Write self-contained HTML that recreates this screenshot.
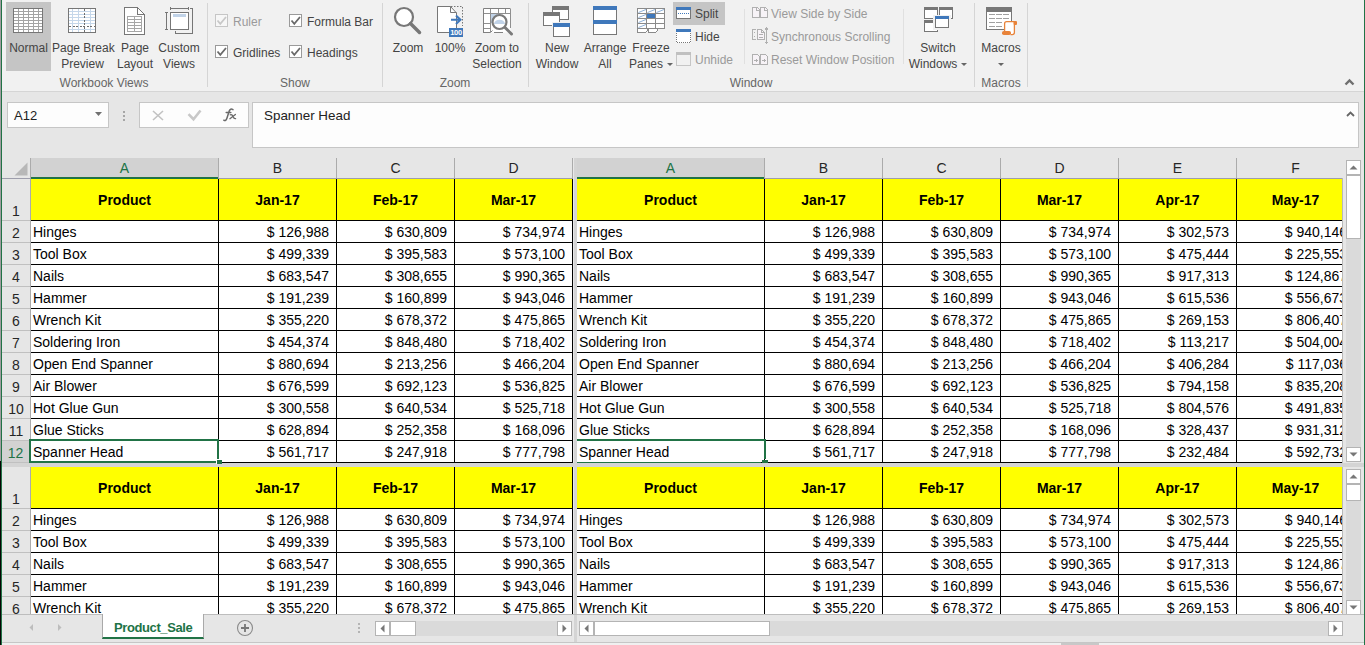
<!DOCTYPE html>
<html><head><meta charset="utf-8">
<style>
*{margin:0;padding:0;box-sizing:border-box}
html,body{width:1365px;height:645px;overflow:hidden;background:#e6e6e6;font-family:"Liberation Sans",sans-serif;position:relative}
.abs{position:absolute}
#ribbon{position:absolute;left:0;top:0;width:1365px;height:92px;background:#f1f1f1;border-bottom:1px solid #d5d5d5}
.rt{position:absolute;font-size:12px;color:#444;white-space:nowrap;line-height:15px}
.rt.c{line-height:16px}
.rt.c{text-align:center}
.dis{color:#9a9a9a}
.dd{display:inline-block;width:0;height:0;border-left:3px solid transparent;border-right:3px solid transparent;border-top:3px solid #666;margin-left:4px;vertical-align:middle}
.gl{position:absolute;font-size:12px;color:#666;white-space:nowrap;line-height:15px;top:76px}
.sep{position:absolute;width:1px;background:#d5d5d5}
.hl{position:absolute;background:#c5c5c5}
.cb{position:absolute;width:13px;height:13px;border:1px solid #8a8a8a;background:#fff}
.cb svg{position:absolute;left:1px;top:1px}
/* grid */
.pane{position:absolute;overflow:hidden;background:#e6e6e6}
.pane div{position:absolute}
.ch{top:0;height:20px;background:#e6e6e6;font-size:14px;color:#262626;text-align:center;line-height:20px;padding-top:0px}
.ch.sel{background:#d2d2d2;color:#217346}
.chsep{top:0;width:1px;height:20px;background:#ababab}
.chbot{height:1px;background:#9e9eac}
.chgreen{height:2px;background:#217346}
.corner{left:0;top:0;width:30px;height:20px;background:#e6e6e6}
.rh{left:0;width:30px;background:#e6e6e6;font-size:14px;color:#262626}
.rh span{position:absolute;left:1px;width:30px;text-align:center;bottom:1px;line-height:16px}
.rh.sel{background:#d2d2d2;color:#217346}
.rhsep{left:0;width:30px;height:1px;background:#c0c0c0}
.rhright{left:30px;width:1px;background:#ababab}
.sbb{position:absolute;width:15px;height:15px;background:#fff;border:1px solid #b4b4b4}
.sbb svg{position:absolute;left:0;top:0}
.sbt{position:absolute;background:#fff;border:1px solid #b4b4b4}
.yel{background:#ffff00}
.wht{background:#fff}
.vb{width:1px;background:#000}
.hb{height:1px;background:#000}
.hd{height:41px;line-height:43px;text-align:center;font-weight:bold;font-size:14px;color:#000;white-space:nowrap}
.tl{height:21px;line-height:22px;font-size:14px;color:#000;white-space:nowrap}
.tr{height:21px;line-height:22px;font-size:14px;color:#000;white-space:nowrap;text-align:right}
</style></head><body>
<div style="position:absolute;left:0;top:0;width:1px;height:461px;background:#a09ca0;z-index:50"></div>
<div style="position:absolute;left:0;top:461px;width:1px;height:184px;background:#080404;z-index:50"></div>
<div style="position:absolute;left:1px;top:0;width:1px;height:645px;background:#217346;z-index:50"></div>
<div style="position:absolute;left:1364px;top:0;width:1px;height:645px;background:#217346;z-index:50"></div>
<div id="ribbon">
<div class="hl" style="left:6px;top:2px;width:45px;height:69px"></div>
<div class="hl" style="left:673px;top:2px;width:52px;height:23px"></div>
<svg width="1365" height="92" style="position:absolute;left:0;top:0" shape-rendering="crispEdges">
<!-- Normal icon -->
<rect x="13" y="8" width="30" height="25" fill="#a3a3a3"/>
<rect x="13.5" y="8.5" width="29" height="24" fill="none" stroke="#767676"/>
<g fill="#fff">
<rect x="14" y="9" width="4" height="2"/><rect x="19" y="9" width="4" height="2"/><rect x="24" y="9" width="4" height="2"/><rect x="29" y="9" width="4" height="2"/><rect x="34" y="9" width="4" height="2"/><rect x="39" y="9" width="3" height="2"/>
<rect x="14" y="12" width="4" height="2"/><rect x="19" y="12" width="4" height="2"/><rect x="24" y="12" width="4" height="2"/><rect x="29" y="12" width="4" height="2"/><rect x="34" y="12" width="4" height="2"/><rect x="39" y="12" width="3" height="2"/>
<rect x="14" y="15" width="4" height="2"/><rect x="19" y="15" width="4" height="2"/><rect x="24" y="15" width="4" height="2"/><rect x="29" y="15" width="4" height="2"/><rect x="34" y="15" width="4" height="2"/><rect x="39" y="15" width="3" height="2"/>
<rect x="14" y="18" width="4" height="2"/><rect x="19" y="18" width="4" height="2"/><rect x="24" y="18" width="4" height="2"/><rect x="29" y="18" width="4" height="2"/><rect x="34" y="18" width="4" height="2"/><rect x="39" y="18" width="3" height="2"/>
<rect x="14" y="21" width="4" height="2"/><rect x="19" y="21" width="4" height="2"/><rect x="24" y="21" width="4" height="2"/><rect x="29" y="21" width="4" height="2"/><rect x="34" y="21" width="4" height="2"/><rect x="39" y="21" width="3" height="2"/>
<rect x="14" y="24" width="4" height="2"/><rect x="19" y="24" width="4" height="2"/><rect x="24" y="24" width="4" height="2"/><rect x="29" y="24" width="4" height="2"/><rect x="34" y="24" width="4" height="2"/><rect x="39" y="24" width="3" height="2"/>
<rect x="14" y="27" width="4" height="2"/><rect x="19" y="27" width="4" height="2"/><rect x="24" y="27" width="4" height="2"/><rect x="29" y="27" width="4" height="2"/><rect x="34" y="27" width="4" height="2"/><rect x="39" y="27" width="3" height="2"/>
<rect x="14" y="30" width="4" height="2"/><rect x="19" y="30" width="4" height="2"/><rect x="24" y="30" width="4" height="2"/><rect x="29" y="30" width="4" height="2"/><rect x="34" y="30" width="4" height="2"/><rect x="39" y="30" width="3" height="2"/>
</g>
<!-- Page break preview -->
<rect x="68" y="8" width="28" height="25" fill="#fff"/>
<g stroke="#c5d7ea" stroke-width="1">
<path d="M72.5 9V32M78.5 9V32M90.5 9V32M69 11.5H95M69 14.5H95M69 17.5H95M69 20.5H95M69 23.5H95M69 29.5H95"/>
</g>
<path d="M84.5 9V32M69 26.5H95" stroke="#6d6d6d" stroke-dasharray="2 1.5"/>
<rect x="68.5" y="8.5" width="27" height="24" fill="none" stroke="#767676"/>
<!-- Page layout -->
<path d="M124.5 7.5H137.5L144.5 14.5V34.5H124.5Z" fill="#fff" stroke="#767676"/>
<path d="M137.5 7.5V14.5H144.5" fill="none" stroke="#767676"/>
<rect x="127.5" y="16.5" width="14" height="15" fill="#fff" stroke="#a6a6a6"/>
<path d="M128 19.5H141M128 22.5H141M128 25.5H141M128 28.5H141M134.5 17V31" stroke="#a6a6a6"/>
<!-- Custom views -->
<rect x="170.5" y="12.5" width="18" height="17" fill="#fff" stroke="#767676"/>
<rect x="173" y="14" width="13" height="3" fill="#c1d3e8"/>
<path d="M170.5 8.5H188.5M170.5 7V10M188.5 7V10M166.5 12.5V29.5M165 12.5H168M165 29.5H168M190 8.5H192.5V33.5H175.5V31" fill="none" stroke="#767676"/>
<!-- separators -->
<!-- checkboxes -->
<rect x="215.5" y="14.5" width="12" height="12" fill="#f7f7f7" stroke="#c6c6c6"/>
<rect x="215.5" y="45.5" width="12" height="12" fill="#fff" stroke="#9a9a9a"/>
<rect x="289.5" y="14.5" width="12" height="12" fill="#fff" stroke="#9a9a9a"/>
<rect x="289.5" y="45.5" width="12" height="12" fill="#fff" stroke="#9a9a9a"/>
</svg>
<svg width="1365" height="92" style="position:absolute;left:0;top:0">
<path d="M217.5 20.5L220.3 23.8L226 17" fill="none" stroke="#c8c8c8" stroke-width="1.8"/>
<path d="M217.5 51.5L220.3 54.8L226 48" fill="none" stroke="#6a6a6a" stroke-width="1.8"/>
<path d="M291.5 20.5L294.3 23.8L300 17" fill="none" stroke="#6a6a6a" stroke-width="1.8"/>
<path d="M291.5 51.5L294.3 54.8L300 48" fill="none" stroke="#6a6a6a" stroke-width="1.8"/>
<!-- zoom -->
<circle cx="404" cy="17" r="9" fill="#fff" stroke="#777" stroke-width="2.2"/>
<path d="M410.5 23.5L419.5 32.5" stroke="#777" stroke-width="3.5" stroke-linecap="round"/>
<!-- 100% -->
<path d="M437.5 6.5H450.5L456.5 13V32.5H437.5Z" fill="#fff" stroke="#777"/>
<path d="M450.5 6.5V12.5H456.5" fill="none" stroke="#777"/>
<path d="M451 6.5H462.5V26" fill="none" stroke="#777" stroke-dasharray="1.5 1.5"/>
<path d="M456.5 21V28" stroke="#777" stroke-dasharray="1.5 1.5"/>
<path d="M451 19.8H460.5M456 15.5L460.5 19.8L456 24" fill="none" stroke="#3f78bb" stroke-width="2"/>
<rect x="449" y="28" width="14" height="9" fill="#3f78bb"/>
<text x="456" y="35.3" font-family="Liberation Sans" font-size="7.5" font-weight="bold" fill="#fff" text-anchor="middle" letter-spacing="-0.3">100</text>
<!-- zoom to selection -->
<rect x="483.5" y="8.5" width="27" height="24" fill="#fff"/>
<path d="M484 13.5H510M490.5 9V32M498.5 9V13M505.5 9V13M484 23.5H491M484 28.5H491M510.5 9V28" fill="none" stroke="#8f8f8f"/>
<path d="M483.5 33V8.5H510.5M483.5 32.5H490.5L492.5 30.5M494 32.5H503" fill="none" stroke="#808080"/>
<rect x="491" y="14" width="8" height="9" fill="#c1d3e8"/>
<circle cx="499.5" cy="22" r="7" fill="#fff" stroke="#7a7a7a" stroke-width="2.2"/>
<path d="M493.8 24A6 6 0 0 1 505.2 24Z" fill="#c1d3e8"/>
<path d="M505 27.5L511.5 34" stroke="#7a7a7a" stroke-width="3" stroke-linecap="round"/>
</svg>
<div class="sep" style="left:207px;top:3px;height:84px"></div>
<div class="sep" style="left:382px;top:3px;height:84px"></div>
<div class="sep" style="left:528px;top:3px;height:84px"></div>
<div class="sep" style="left:974px;top:3px;height:84px"></div>
<div class="sep" style="left:1027px;top:3px;height:84px"></div>
<div class="sep" style="left:744px;top:9px;height:55px;background:#e0e0e0"></div>
<div class="sep" style="left:903px;top:9px;height:55px;background:#e0e0e0"></div>
<!-- texts -->
<div class="rt c" style="left:-2px;width:61px;top:40px">Normal</div>
<div class="rt c" style="left:52px;width:61px;top:40px">Page Break<br>Preview</div>
<div class="rt c" style="left:110px;width:50px;top:40px">Page<br>Layout</div>
<div class="rt c" style="left:154px;width:50px;top:40px">Custom<br>Views</div>
<div class="gl" style="left:54px;width:100px;text-align:center">Workbook Views</div>
<div class="rt dis" style="left:233px;top:15px">Ruler</div>
<div class="rt" style="left:233px;top:46px">Gridlines</div>
<div class="rt" style="left:307px;top:15px">Formula Bar</div>
<div class="rt" style="left:307px;top:46px">Headings</div>
<div class="gl" style="left:265px;width:60px;text-align:center">Show</div>
<div class="rt c" style="left:383px;width:50px;top:40px">Zoom</div>
<div class="rt c" style="left:425px;width:50px;top:40px">100%</div>
<div class="rt c" style="left:467px;width:60px;top:40px">Zoom to<br>Selection</div>
<div class="gl" style="left:425px;width:60px;text-align:center">Zoom</div>
<div class="rt c" style="left:527px;width:60px;top:40px">New<br>Window</div>
<div class="rt c" style="left:575px;width:60px;top:40px">Arrange<br>All</div>
<div class="rt c" style="left:621px;width:60px;top:40px">Freeze<br>Panes<span class="dd"></span></div>
<div class="rt" style="left:695px;top:7px">Split</div>
<div class="rt" style="left:695px;top:30px">Hide</div>
<div class="rt dis" style="left:695px;top:53px">Unhide</div>
<div class="rt dis" style="left:771px;top:7px">View Side by Side</div>
<div class="rt dis" style="left:771px;top:30px">Synchronous Scrolling</div>
<div class="rt dis" style="left:771px;top:53px">Reset Window Position</div>
<div class="gl" style="left:721px;width:60px;text-align:center">Window</div>
<div class="rt c" style="left:908px;width:60px;top:40px">Switch<br>Windows<span class="dd"></span></div>
<div class="rt c" style="left:971px;width:60px;top:40px">Macros<br><span class="dd" style="margin-left:0"></span></div>
<div class="gl" style="left:971px;width:60px;text-align:center">Macros</div>

<svg width="1365" height="92" style="position:absolute;left:0;top:0" shape-rendering="crispEdges">
<!-- New Window -->
<rect x="552.5" y="6.5" width="16" height="13" fill="#fff" stroke="#777"/>
<rect x="552" y="6" width="17" height="4" fill="#777"/>
<rect x="543.5" y="12.5" width="16" height="13" fill="#fff" stroke="#777"/>
<rect x="543" y="12" width="17" height="4" fill="#777"/>
<rect x="552" y="22" width="19" height="16" fill="#f1f1f1"/>
<rect x="553.5" y="23.5" width="16" height="13" fill="#fff" stroke="#777"/>
<rect x="553" y="23" width="17" height="4" fill="#3f78bb"/>
<!-- Arrange All -->
<rect x="593.5" y="6.5" width="23" height="28" fill="#fff" stroke="#777"/>
<rect x="593" y="6" width="24" height="4" fill="#3f78bb"/>
<rect x="593" y="20" width="24" height="4" fill="#3f78bb"/>
<!-- Freeze panes -->
<rect x="637.5" y="8.5" width="27" height="20" fill="#fff" stroke="#8a8a8a"/>
<path d="M646.5 9V28M655.5 9V28M638 13.5H664M638 18.5H664M638 23.5H664" stroke="#8a8a8a"/>
<rect x="647" y="14" width="8" height="4" fill="#3f78bb"/>
</svg><svg width="1365" height="92" style="position:absolute;left:0;top:0"><path d="M638.5 12.5L646 9.5M647.5 12.5L655 9.5M656.5 12.5L664 9.5M638.5 17.5L646 14.5M638.5 22.5L646 19.5M638.5 27.5L646 24.5" stroke="#8fb1d9" stroke-width="1"/></svg><svg width="1365" height="92" style="position:absolute;left:0;top:0" shape-rendering="crispEdges">
<path d="M637.5 28.5V32.5H645.5L647.5 30.5V28.5M648.5 28.5V32.5H655.5L657.5 30.5V28.5" fill="#fff" stroke="#8a8a8a"/>
<!-- Split -->
<rect x="676.5" y="7.5" width="14" height="11" fill="#fff" stroke="#777"/>
<rect x="676" y="7" width="15" height="3" fill="#3f78bb"/>
<path d="M678 13.5H690" stroke="#3f78bb" stroke-dasharray="1 1"/>
<!-- Hide -->
<rect x="676" y="29" width="15" height="14" fill="#fff"/>
<path d="M676.5 31V42.5H690.5V31" fill="none" stroke="#777" stroke-dasharray="1 1"/>
<rect x="676" y="29" width="15" height="3" fill="#3f78bb"/>
<!-- Unhide -->
<rect x="676.5" y="52.5" width="14" height="13" fill="#f1f1f1" stroke="#c6c6c6"/>
<rect x="676" y="52" width="15" height="3" fill="#c0c0c0"/>
<!-- View side by side -->
<path d="M752.5 7.5H757.5L759.5 9.5V17.5H752.5Z M760.5 7.5H765.5L767.5 9.5V17.5H760.5Z" fill="#f7f3f7" stroke="#b0b0b0"/>
<path d="M756.5 7.5V10.5H759.5M764.5 7.5V10.5H767.5" fill="none" stroke="#b0b0b0"/>
<!-- sync scrolling -->
<path d="M755.5 29.5H752.5V39.5H755.5" fill="none" stroke="#b0b0b0"/>
<path d="M757.5 29.5H761.5L764.5 32.5V39.5H757.5Z" fill="#f7f3f7" stroke="#b0b0b0"/>
<path d="M761.5 29.5V32.5H764.5M754 32.5H755M754 36.5H755M759 34.5H763M759 37.5H763M766.5 28V43.5M765 29.5L766.5 28L768 29.5M765 42L766.5 43.5L768 42" fill="none" stroke="#b0b0b0"/>
<!-- reset -->
<path d="M752.5 54.5H757.5L759.5 56.5V64.5H752.5Z M760.5 54.5H765.5L767.5 56.5V64.5H760.5Z" fill="#f7f3f7" stroke="#b0b0b0"/>
<path d="M754 60.5H758M756.5 59V62M762 60.5H766M764.5 59V62" fill="none" stroke="#b0b0b0"/>
<!-- Switch windows -->
<rect x="924.5" y="7.5" width="13" height="11" fill="#fff" stroke="#777"/>
<rect x="924" y="7" width="14" height="3" fill="#777"/>
<rect x="939.5" y="7.5" width="13" height="11" fill="#fff" stroke="#777"/>
<rect x="939" y="7" width="14" height="3" fill="#777"/>
<rect x="924.5" y="20.5" width="13" height="11" fill="#fff" stroke="#777"/>
<rect x="924" y="20" width="14" height="3" fill="#777"/>
<rect x="933" y="15" width="18" height="15" fill="#f1f1f1"/>
<rect x="935.5" y="16.5" width="13" height="11" fill="#fff" stroke="#777"/>
<rect x="935" y="16" width="14" height="3" fill="#3f78bb"/>
<!-- Macros -->
<rect x="986.5" y="7.5" width="25" height="22" fill="#fff" stroke="#777"/>
<rect x="986" y="7" width="26" height="5" fill="#777"/>
<path d="M989 14.5H995M996 14.5H1002M1003 14.5H1009M989 18.5H995M996 18.5H1002M1003 18.5H1009M989 22.5H995M996 22.5H1002M989 26.5H995M996 26.5H1002" stroke="#a0a0a0"/>
</svg>
<svg width="1365" height="92" style="position:absolute;left:0;top:0">
<rect x="1005" y="22" width="9.5" height="12.5" fill="#fff"/>
<path d="M1004.6 31.5V23.8Q1004.6 21.7 1006.7 21.7H1014.4V32.5Q1014.4 34.6 1012.3 34.6H1010.5" fill="none" stroke="#e8833a" stroke-width="1.3"/>
<rect x="1013.6" y="21" width="3.4" height="4" rx="1" fill="#e8833a"/>
<rect x="1002" y="31" width="9" height="4" rx="1.8" fill="#e8833a"/>
</svg>


</div>
<!-- formula bar -->
<div class="abs" style="left:7px;top:102px;width:102px;height:26px;background:#fdfdfd;border:1px solid #c6c6c6"></div>
<div class="abs" style="left:14px;top:108px;font-size:13px;color:#222;line-height:15px">A12</div>
<div class="abs" style="left:139px;top:102px;width:110px;height:26px;background:#fdfdfd;border:1px solid #c6c6c6"></div>
<div class="abs" style="left:252px;top:102px;width:1107px;height:46px;background:#fdfdfd;border:1px solid #c6c6c6"></div>
<div class="abs" style="left:264px;top:108px;font-size:13.4px;color:#222;line-height:15px">Spanner Head</div>
<svg width="1365" height="60" style="position:absolute;left:0;top:96px">
<path d="M95 16H102L98.5 20Z" fill="#707070"/>
<rect x="123" y="15" width="2" height="2" fill="#a6a6a6"/><rect x="123" y="19" width="2" height="2" fill="#a6a6a6"/><rect x="123" y="23" width="2" height="2" fill="#a6a6a6"/>
<path d="M153 15L163 24M163 15L153 24" stroke="#c2c2c2" stroke-width="1.6"/>
<path d="M188.5 18.2L193.5 23.2L200.5 14.5" fill="none" stroke="#c8c8c8" stroke-width="2.6"/>
<path d="M223.8 24.2Q225.8 25.6 227 22L229.3 14.8Q230.3 12.2 233 13.6M226.2 16.6H230.8" fill="none" stroke="#6a6a6a" stroke-width="1.5" stroke-linecap="round"/>
<path d="M230.2 18.8Q232 18 233 20.5T235.6 22.6M235.4 18.4L229.9 22.7" fill="none" stroke="#6a6a6a" stroke-width="1.3" stroke-linecap="round"/>
<path d="M1347 20L1350.5 16.5L1354 20" fill="none" stroke="#666" stroke-width="1.8"/>
</svg>
<svg width="20" height="12" style="position:absolute;left:1340px;top:76px"><path d="M5.5 8.5L9.5 4.5L13.5 8.5" fill="none" stroke="#6f6f6f" stroke-width="2.4"/></svg>
<div class="pane" style="left:0px;top:158px;width:573px;height:305px">
<div class="ch sel" style="left:31px;width:187px">A</div>
<div class="chsep" style="left:218px"></div>
<div class="ch" style="left:219px;width:117px">B</div>
<div class="chsep" style="left:336px"></div>
<div class="ch" style="left:337px;width:117px">C</div>
<div class="chsep" style="left:454px"></div>
<div class="ch" style="left:455px;width:117px">D</div>
<div class="chsep" style="left:572px"></div>
<div class="chbot" style="left:0;width:573px;top:20px"></div>
<div class="chgreen" style="left:31px;width:187px;top:19px"></div>
<div class="corner"></div>
<div style="left:30px;top:0;width:1px;height:20px;background:#ababab"></div>
<svg class="tri" width="14" height="14" style="position:absolute;left:14px;top:4px"><path d="M13.5 0.5 L13.5 13.5 L0.5 13.5 Z" fill="#b8b8b8"/></svg>
<div class="rh" style="top:21px;height:41px"><span>1</span></div>
<div class="rhsep" style="top:62px"></div>
<div class="rh" style="top:63px;height:21px"><span>2</span></div>
<div class="rhsep" style="top:84px"></div>
<div class="rh" style="top:85px;height:21px"><span>3</span></div>
<div class="rhsep" style="top:106px"></div>
<div class="rh" style="top:107px;height:21px"><span>4</span></div>
<div class="rhsep" style="top:128px"></div>
<div class="rh" style="top:129px;height:21px"><span>5</span></div>
<div class="rhsep" style="top:150px"></div>
<div class="rh" style="top:151px;height:21px"><span>6</span></div>
<div class="rhsep" style="top:172px"></div>
<div class="rh" style="top:173px;height:21px"><span>7</span></div>
<div class="rhsep" style="top:194px"></div>
<div class="rh" style="top:195px;height:21px"><span>8</span></div>
<div class="rhsep" style="top:216px"></div>
<div class="rh" style="top:217px;height:21px"><span>9</span></div>
<div class="rhsep" style="top:238px"></div>
<div class="rh" style="top:239px;height:21px"><span>10</span></div>
<div class="rhsep" style="top:260px"></div>
<div class="rh" style="top:261px;height:21px"><span>11</span></div>
<div class="rhsep" style="top:282px"></div>
<div class="rh sel" style="top:283px;height:21px"><span>12</span></div>
<div class="rhsep" style="top:304px"></div>
<div class="rhright" style="top:21px;height:305px"></div>
<div class="yel" style="left:31px;top:21px;width:542px;height:41px"></div>
<div class="wht" style="left:31px;top:63px;width:542px;height:305px"></div>
<div class="vb" style="left:218px;top:21px;height:305px"></div>
<div class="vb" style="left:336px;top:21px;height:305px"></div>
<div class="vb" style="left:454px;top:21px;height:305px"></div>
<div class="vb" style="left:572px;top:21px;height:305px"></div>
<div class="hb" style="left:31px;top:62px;width:542px"></div>
<div class="hb" style="left:31px;top:84px;width:542px"></div>
<div class="hb" style="left:31px;top:106px;width:542px"></div>
<div class="hb" style="left:31px;top:128px;width:542px"></div>
<div class="hb" style="left:31px;top:150px;width:542px"></div>
<div class="hb" style="left:31px;top:172px;width:542px"></div>
<div class="hb" style="left:31px;top:194px;width:542px"></div>
<div class="hb" style="left:31px;top:216px;width:542px"></div>
<div class="hb" style="left:31px;top:238px;width:542px"></div>
<div class="hb" style="left:31px;top:260px;width:542px"></div>
<div class="hb" style="left:31px;top:282px;width:542px"></div>
<div class="hb" style="left:31px;top:304px;width:542px"></div>
<div class="hd" style="left:31px;top:21px;width:187px">Product</div>
<div class="tl" style="left:33px;top:63px">Hinges</div>
<div class="tl" style="left:33px;top:85px">Tool Box</div>
<div class="tl" style="left:33px;top:107px">Nails</div>
<div class="tl" style="left:33px;top:129px">Hammer</div>
<div class="tl" style="left:33px;top:151px">Wrench Kit</div>
<div class="tl" style="left:33px;top:173px">Soldering Iron</div>
<div class="tl" style="left:33px;top:195px">Open End Spanner</div>
<div class="tl" style="left:33px;top:217px">Air Blower</div>
<div class="tl" style="left:33px;top:239px">Hot Glue Gun</div>
<div class="tl" style="left:33px;top:261px">Glue Sticks</div>
<div class="tl" style="left:33px;top:283px">Spanner Head</div>
<div class="hd" style="left:219px;top:21px;width:117px">Jan-17</div>
<div class="tr" style="left:219px;width:110px;top:63px">$ 126,988</div>
<div class="tr" style="left:219px;width:110px;top:85px">$ 499,339</div>
<div class="tr" style="left:219px;width:110px;top:107px">$ 683,547</div>
<div class="tr" style="left:219px;width:110px;top:129px">$ 191,239</div>
<div class="tr" style="left:219px;width:110px;top:151px">$ 355,220</div>
<div class="tr" style="left:219px;width:110px;top:173px">$ 454,374</div>
<div class="tr" style="left:219px;width:110px;top:195px">$ 880,694</div>
<div class="tr" style="left:219px;width:110px;top:217px">$ 676,599</div>
<div class="tr" style="left:219px;width:110px;top:239px">$ 300,558</div>
<div class="tr" style="left:219px;width:110px;top:261px">$ 628,894</div>
<div class="tr" style="left:219px;width:110px;top:283px">$ 561,717</div>
<div class="hd" style="left:337px;top:21px;width:117px">Feb-17</div>
<div class="tr" style="left:337px;width:110px;top:63px">$ 630,809</div>
<div class="tr" style="left:337px;width:110px;top:85px">$ 395,583</div>
<div class="tr" style="left:337px;width:110px;top:107px">$ 308,655</div>
<div class="tr" style="left:337px;width:110px;top:129px">$ 160,899</div>
<div class="tr" style="left:337px;width:110px;top:151px">$ 678,372</div>
<div class="tr" style="left:337px;width:110px;top:173px">$ 848,480</div>
<div class="tr" style="left:337px;width:110px;top:195px">$ 213,256</div>
<div class="tr" style="left:337px;width:110px;top:217px">$ 692,123</div>
<div class="tr" style="left:337px;width:110px;top:239px">$ 640,534</div>
<div class="tr" style="left:337px;width:110px;top:261px">$ 252,358</div>
<div class="tr" style="left:337px;width:110px;top:283px">$ 247,918</div>
<div class="hd" style="left:455px;top:21px;width:117px">Mar-17</div>
<div class="tr" style="left:455px;width:110px;top:63px">$ 734,974</div>
<div class="tr" style="left:455px;width:110px;top:85px">$ 573,100</div>
<div class="tr" style="left:455px;width:110px;top:107px">$ 990,365</div>
<div class="tr" style="left:455px;width:110px;top:129px">$ 943,046</div>
<div class="tr" style="left:455px;width:110px;top:151px">$ 475,865</div>
<div class="tr" style="left:455px;width:110px;top:173px">$ 718,402</div>
<div class="tr" style="left:455px;width:110px;top:195px">$ 466,204</div>
<div class="tr" style="left:455px;width:110px;top:217px">$ 536,825</div>
<div class="tr" style="left:455px;width:110px;top:239px">$ 525,718</div>
<div class="tr" style="left:455px;width:110px;top:261px">$ 168,096</div>
<div class="tr" style="left:455px;width:110px;top:283px">$ 777,798</div>
</div>
<div class="pane" style="left:577px;top:158px;width:766px;height:305px">
<div class="ch sel" style="left:0px;width:187px">A</div>
<div class="chsep" style="left:187px"></div>
<div class="ch" style="left:188px;width:117px">B</div>
<div class="chsep" style="left:305px"></div>
<div class="ch" style="left:306px;width:117px">C</div>
<div class="chsep" style="left:423px"></div>
<div class="ch" style="left:424px;width:117px">D</div>
<div class="chsep" style="left:541px"></div>
<div class="ch" style="left:542px;width:117px">E</div>
<div class="chsep" style="left:659px"></div>
<div class="ch" style="left:660px;width:117px">F</div>
<div class="chsep" style="left:777px"></div>
<div class="chbot" style="left:0;width:766px;top:20px"></div>
<div class="chgreen" style="left:0px;width:187px;top:19px"></div>
<div class="yel" style="left:0px;top:21px;width:778px;height:41px"></div>
<div class="wht" style="left:0px;top:63px;width:778px;height:305px"></div>
<div class="vb" style="left:187px;top:21px;height:305px"></div>
<div class="vb" style="left:305px;top:21px;height:305px"></div>
<div class="vb" style="left:423px;top:21px;height:305px"></div>
<div class="vb" style="left:541px;top:21px;height:305px"></div>
<div class="vb" style="left:659px;top:21px;height:305px"></div>
<div class="vb" style="left:777px;top:21px;height:305px"></div>
<div class="hb" style="left:0px;top:62px;width:778px"></div>
<div class="hb" style="left:0px;top:84px;width:778px"></div>
<div class="hb" style="left:0px;top:106px;width:778px"></div>
<div class="hb" style="left:0px;top:128px;width:778px"></div>
<div class="hb" style="left:0px;top:150px;width:778px"></div>
<div class="hb" style="left:0px;top:172px;width:778px"></div>
<div class="hb" style="left:0px;top:194px;width:778px"></div>
<div class="hb" style="left:0px;top:216px;width:778px"></div>
<div class="hb" style="left:0px;top:238px;width:778px"></div>
<div class="hb" style="left:0px;top:260px;width:778px"></div>
<div class="hb" style="left:0px;top:282px;width:778px"></div>
<div class="hb" style="left:0px;top:304px;width:778px"></div>
<div class="hd" style="left:0px;top:21px;width:187px">Product</div>
<div class="tl" style="left:2px;top:63px">Hinges</div>
<div class="tl" style="left:2px;top:85px">Tool Box</div>
<div class="tl" style="left:2px;top:107px">Nails</div>
<div class="tl" style="left:2px;top:129px">Hammer</div>
<div class="tl" style="left:2px;top:151px">Wrench Kit</div>
<div class="tl" style="left:2px;top:173px">Soldering Iron</div>
<div class="tl" style="left:2px;top:195px">Open End Spanner</div>
<div class="tl" style="left:2px;top:217px">Air Blower</div>
<div class="tl" style="left:2px;top:239px">Hot Glue Gun</div>
<div class="tl" style="left:2px;top:261px">Glue Sticks</div>
<div class="tl" style="left:2px;top:283px">Spanner Head</div>
<div class="hd" style="left:188px;top:21px;width:117px">Jan-17</div>
<div class="tr" style="left:188px;width:110px;top:63px">$ 126,988</div>
<div class="tr" style="left:188px;width:110px;top:85px">$ 499,339</div>
<div class="tr" style="left:188px;width:110px;top:107px">$ 683,547</div>
<div class="tr" style="left:188px;width:110px;top:129px">$ 191,239</div>
<div class="tr" style="left:188px;width:110px;top:151px">$ 355,220</div>
<div class="tr" style="left:188px;width:110px;top:173px">$ 454,374</div>
<div class="tr" style="left:188px;width:110px;top:195px">$ 880,694</div>
<div class="tr" style="left:188px;width:110px;top:217px">$ 676,599</div>
<div class="tr" style="left:188px;width:110px;top:239px">$ 300,558</div>
<div class="tr" style="left:188px;width:110px;top:261px">$ 628,894</div>
<div class="tr" style="left:188px;width:110px;top:283px">$ 561,717</div>
<div class="hd" style="left:306px;top:21px;width:117px">Feb-17</div>
<div class="tr" style="left:306px;width:110px;top:63px">$ 630,809</div>
<div class="tr" style="left:306px;width:110px;top:85px">$ 395,583</div>
<div class="tr" style="left:306px;width:110px;top:107px">$ 308,655</div>
<div class="tr" style="left:306px;width:110px;top:129px">$ 160,899</div>
<div class="tr" style="left:306px;width:110px;top:151px">$ 678,372</div>
<div class="tr" style="left:306px;width:110px;top:173px">$ 848,480</div>
<div class="tr" style="left:306px;width:110px;top:195px">$ 213,256</div>
<div class="tr" style="left:306px;width:110px;top:217px">$ 692,123</div>
<div class="tr" style="left:306px;width:110px;top:239px">$ 640,534</div>
<div class="tr" style="left:306px;width:110px;top:261px">$ 252,358</div>
<div class="tr" style="left:306px;width:110px;top:283px">$ 247,918</div>
<div class="hd" style="left:424px;top:21px;width:117px">Mar-17</div>
<div class="tr" style="left:424px;width:110px;top:63px">$ 734,974</div>
<div class="tr" style="left:424px;width:110px;top:85px">$ 573,100</div>
<div class="tr" style="left:424px;width:110px;top:107px">$ 990,365</div>
<div class="tr" style="left:424px;width:110px;top:129px">$ 943,046</div>
<div class="tr" style="left:424px;width:110px;top:151px">$ 475,865</div>
<div class="tr" style="left:424px;width:110px;top:173px">$ 718,402</div>
<div class="tr" style="left:424px;width:110px;top:195px">$ 466,204</div>
<div class="tr" style="left:424px;width:110px;top:217px">$ 536,825</div>
<div class="tr" style="left:424px;width:110px;top:239px">$ 525,718</div>
<div class="tr" style="left:424px;width:110px;top:261px">$ 168,096</div>
<div class="tr" style="left:424px;width:110px;top:283px">$ 777,798</div>
<div class="hd" style="left:542px;top:21px;width:117px">Apr-17</div>
<div class="tr" style="left:542px;width:110px;top:63px">$ 302,573</div>
<div class="tr" style="left:542px;width:110px;top:85px">$ 475,444</div>
<div class="tr" style="left:542px;width:110px;top:107px">$ 917,313</div>
<div class="tr" style="left:542px;width:110px;top:129px">$ 615,536</div>
<div class="tr" style="left:542px;width:110px;top:151px">$ 269,153</div>
<div class="tr" style="left:542px;width:110px;top:173px">$ 113,217</div>
<div class="tr" style="left:542px;width:110px;top:195px">$ 406,284</div>
<div class="tr" style="left:542px;width:110px;top:217px">$ 794,158</div>
<div class="tr" style="left:542px;width:110px;top:239px">$ 804,576</div>
<div class="tr" style="left:542px;width:110px;top:261px">$ 328,437</div>
<div class="tr" style="left:542px;width:110px;top:283px">$ 232,484</div>
<div class="hd" style="left:660px;top:21px;width:117px">May-17</div>
<div class="tr" style="left:660px;width:110px;top:63px">$ 940,146</div>
<div class="tr" style="left:660px;width:110px;top:85px">$ 225,553</div>
<div class="tr" style="left:660px;width:110px;top:107px">$ 124,867</div>
<div class="tr" style="left:660px;width:110px;top:129px">$ 556,673</div>
<div class="tr" style="left:660px;width:110px;top:151px">$ 806,407</div>
<div class="tr" style="left:660px;width:110px;top:173px">$ 504,004</div>
<div class="tr" style="left:660px;width:110px;top:195px">$ 117,036</div>
<div class="tr" style="left:660px;width:110px;top:217px">$ 835,208</div>
<div class="tr" style="left:660px;width:110px;top:239px">$ 491,835</div>
<div class="tr" style="left:660px;width:110px;top:261px">$ 931,312</div>
<div class="tr" style="left:660px;width:110px;top:283px">$ 592,732</div>
</div>
<div class="pane" style="left:0px;top:467px;width:573px;height:147px">
<div class="rh" style="top:0px;height:41px"><span>1</span></div>
<div class="rhsep" style="top:41px"></div>
<div class="rh" style="top:42px;height:21px"><span>2</span></div>
<div class="rhsep" style="top:63px"></div>
<div class="rh" style="top:64px;height:21px"><span>3</span></div>
<div class="rhsep" style="top:85px"></div>
<div class="rh" style="top:86px;height:21px"><span>4</span></div>
<div class="rhsep" style="top:107px"></div>
<div class="rh" style="top:108px;height:21px"><span>5</span></div>
<div class="rhsep" style="top:129px"></div>
<div class="rh" style="top:130px;height:21px"><span>6</span></div>
<div class="rhsep" style="top:151px"></div>
<div class="rh" style="top:152px;height:21px"><span>7</span></div>
<div class="rhsep" style="top:173px"></div>
<div class="rhright" style="top:0px;height:147px"></div>
<div class="yel" style="left:31px;top:0px;width:542px;height:41px"></div>
<div class="wht" style="left:31px;top:42px;width:542px;height:147px"></div>
<div class="vb" style="left:218px;top:0px;height:147px"></div>
<div class="vb" style="left:336px;top:0px;height:147px"></div>
<div class="vb" style="left:454px;top:0px;height:147px"></div>
<div class="vb" style="left:572px;top:0px;height:147px"></div>
<div class="hb" style="left:31px;top:41px;width:542px"></div>
<div class="hb" style="left:31px;top:63px;width:542px"></div>
<div class="hb" style="left:31px;top:85px;width:542px"></div>
<div class="hb" style="left:31px;top:107px;width:542px"></div>
<div class="hb" style="left:31px;top:129px;width:542px"></div>
<div class="hb" style="left:31px;top:151px;width:542px"></div>
<div class="hb" style="left:31px;top:173px;width:542px"></div>
<div class="hd" style="left:31px;top:0px;width:187px">Product</div>
<div class="tl" style="left:33px;top:42px">Hinges</div>
<div class="tl" style="left:33px;top:64px">Tool Box</div>
<div class="tl" style="left:33px;top:86px">Nails</div>
<div class="tl" style="left:33px;top:108px">Hammer</div>
<div class="tl" style="left:33px;top:130px">Wrench Kit</div>
<div class="tl" style="left:33px;top:152px">Soldering Iron</div>
<div class="hd" style="left:219px;top:0px;width:117px">Jan-17</div>
<div class="tr" style="left:219px;width:110px;top:42px">$ 126,988</div>
<div class="tr" style="left:219px;width:110px;top:64px">$ 499,339</div>
<div class="tr" style="left:219px;width:110px;top:86px">$ 683,547</div>
<div class="tr" style="left:219px;width:110px;top:108px">$ 191,239</div>
<div class="tr" style="left:219px;width:110px;top:130px">$ 355,220</div>
<div class="tr" style="left:219px;width:110px;top:152px">$ 454,374</div>
<div class="hd" style="left:337px;top:0px;width:117px">Feb-17</div>
<div class="tr" style="left:337px;width:110px;top:42px">$ 630,809</div>
<div class="tr" style="left:337px;width:110px;top:64px">$ 395,583</div>
<div class="tr" style="left:337px;width:110px;top:86px">$ 308,655</div>
<div class="tr" style="left:337px;width:110px;top:108px">$ 160,899</div>
<div class="tr" style="left:337px;width:110px;top:130px">$ 678,372</div>
<div class="tr" style="left:337px;width:110px;top:152px">$ 848,480</div>
<div class="hd" style="left:455px;top:0px;width:117px">Mar-17</div>
<div class="tr" style="left:455px;width:110px;top:42px">$ 734,974</div>
<div class="tr" style="left:455px;width:110px;top:64px">$ 573,100</div>
<div class="tr" style="left:455px;width:110px;top:86px">$ 990,365</div>
<div class="tr" style="left:455px;width:110px;top:108px">$ 943,046</div>
<div class="tr" style="left:455px;width:110px;top:130px">$ 475,865</div>
<div class="tr" style="left:455px;width:110px;top:152px">$ 718,402</div>
</div>
<div class="pane" style="left:577px;top:467px;width:766px;height:147px">
<div class="yel" style="left:0px;top:0px;width:778px;height:41px"></div>
<div class="wht" style="left:0px;top:42px;width:778px;height:147px"></div>
<div class="vb" style="left:187px;top:0px;height:147px"></div>
<div class="vb" style="left:305px;top:0px;height:147px"></div>
<div class="vb" style="left:423px;top:0px;height:147px"></div>
<div class="vb" style="left:541px;top:0px;height:147px"></div>
<div class="vb" style="left:659px;top:0px;height:147px"></div>
<div class="vb" style="left:777px;top:0px;height:147px"></div>
<div class="hb" style="left:0px;top:41px;width:778px"></div>
<div class="hb" style="left:0px;top:63px;width:778px"></div>
<div class="hb" style="left:0px;top:85px;width:778px"></div>
<div class="hb" style="left:0px;top:107px;width:778px"></div>
<div class="hb" style="left:0px;top:129px;width:778px"></div>
<div class="hb" style="left:0px;top:151px;width:778px"></div>
<div class="hb" style="left:0px;top:173px;width:778px"></div>
<div class="hd" style="left:0px;top:0px;width:187px">Product</div>
<div class="tl" style="left:2px;top:42px">Hinges</div>
<div class="tl" style="left:2px;top:64px">Tool Box</div>
<div class="tl" style="left:2px;top:86px">Nails</div>
<div class="tl" style="left:2px;top:108px">Hammer</div>
<div class="tl" style="left:2px;top:130px">Wrench Kit</div>
<div class="tl" style="left:2px;top:152px">Soldering Iron</div>
<div class="hd" style="left:188px;top:0px;width:117px">Jan-17</div>
<div class="tr" style="left:188px;width:110px;top:42px">$ 126,988</div>
<div class="tr" style="left:188px;width:110px;top:64px">$ 499,339</div>
<div class="tr" style="left:188px;width:110px;top:86px">$ 683,547</div>
<div class="tr" style="left:188px;width:110px;top:108px">$ 191,239</div>
<div class="tr" style="left:188px;width:110px;top:130px">$ 355,220</div>
<div class="tr" style="left:188px;width:110px;top:152px">$ 454,374</div>
<div class="hd" style="left:306px;top:0px;width:117px">Feb-17</div>
<div class="tr" style="left:306px;width:110px;top:42px">$ 630,809</div>
<div class="tr" style="left:306px;width:110px;top:64px">$ 395,583</div>
<div class="tr" style="left:306px;width:110px;top:86px">$ 308,655</div>
<div class="tr" style="left:306px;width:110px;top:108px">$ 160,899</div>
<div class="tr" style="left:306px;width:110px;top:130px">$ 678,372</div>
<div class="tr" style="left:306px;width:110px;top:152px">$ 848,480</div>
<div class="hd" style="left:424px;top:0px;width:117px">Mar-17</div>
<div class="tr" style="left:424px;width:110px;top:42px">$ 734,974</div>
<div class="tr" style="left:424px;width:110px;top:64px">$ 573,100</div>
<div class="tr" style="left:424px;width:110px;top:86px">$ 990,365</div>
<div class="tr" style="left:424px;width:110px;top:108px">$ 943,046</div>
<div class="tr" style="left:424px;width:110px;top:130px">$ 475,865</div>
<div class="tr" style="left:424px;width:110px;top:152px">$ 718,402</div>
<div class="hd" style="left:542px;top:0px;width:117px">Apr-17</div>
<div class="tr" style="left:542px;width:110px;top:42px">$ 302,573</div>
<div class="tr" style="left:542px;width:110px;top:64px">$ 475,444</div>
<div class="tr" style="left:542px;width:110px;top:86px">$ 917,313</div>
<div class="tr" style="left:542px;width:110px;top:108px">$ 615,536</div>
<div class="tr" style="left:542px;width:110px;top:130px">$ 269,153</div>
<div class="tr" style="left:542px;width:110px;top:152px">$ 113,217</div>
<div class="hd" style="left:660px;top:0px;width:117px">May-17</div>
<div class="tr" style="left:660px;width:110px;top:42px">$ 940,146</div>
<div class="tr" style="left:660px;width:110px;top:64px">$ 225,553</div>
<div class="tr" style="left:660px;width:110px;top:86px">$ 124,867</div>
<div class="tr" style="left:660px;width:110px;top:108px">$ 556,673</div>
<div class="tr" style="left:660px;width:110px;top:130px">$ 806,407</div>
<div class="tr" style="left:660px;width:110px;top:152px">$ 504,004</div>
</div>

<!-- split bars -->
<div class="abs" style="left:573px;top:158px;width:4px;height:484px;background:#d4d4d4;border-left:1px solid #e8e8e8"></div>
<div class="abs" style="left:0;top:463px;width:1343px;height:4px;background:#d4d4d4"></div>
<!-- selection left pane -->
<div class="abs" style="left:0;top:441px;width:30px;height:21px;background:#d2d2d2;color:#217346;font-size:14px;line-height:24px;text-align:center;padding-left:1px">12</div>
<div class="abs" style="left:29px;top:439px;width:190px;height:24px;border:2px solid #217346"></div>
<div class="abs" style="left:216px;top:459px;width:5px;height:4px;background:#217346;border-left:1px solid #fff;border-top:1px solid #fff;box-sizing:content-box"></div>
<!-- selection right pane -->
<div class="abs" style="left:577px;top:439px;width:189px;height:2px;background:#217346"></div>
<div class="abs" style="left:764px;top:439px;width:2px;height:20px;background:#217346"></div>
<div class="abs" style="left:577px;top:462px;width:184px;height:1px;background:#217346"></div>
<div class="abs" style="left:762px;top:460px;width:6px;height:3px;background:#217346"></div>
<!-- right border of right panes -->
<div class="abs" style="left:1342px;top:178px;width:1px;height:285px;background:#b8b8b8"></div>
<div class="abs" style="left:1342px;top:467px;width:1px;height:148px;background:#b8b8b8"></div>
<div class="abs" style="left:1343px;top:158px;width:21px;height:484px;background:#e6e6e6"></div>
<!-- vertical scrollbars -->
<div class="abs" style="left:1346px;top:174px;width:15px;height:274px;background:#dadada"></div>
<div class="sbb" style="left:1346px;top:160px"><svg width="13" height="13"><path d="M2.5 8.5H10.5L6.5 4.5Z" fill="#777"/></svg></div>
<div class="sbt" style="left:1346px;top:175px;width:15px;height:64px"></div>
<div class="sbb" style="left:1346px;top:447px"><svg width="13" height="13"><path d="M2.5 4.5H10.5L6.5 8.5Z" fill="#777"/></svg></div>
<div class="abs" style="left:1343px;top:463px;width:21px;height:4px;background:#d4d4d4"></div>
<div class="abs" style="left:1346px;top:483px;width:15px;height:118px;background:#dadada"></div>
<div class="sbb" style="left:1346px;top:469px"><svg width="13" height="13"><path d="M2.5 8.5H10.5L6.5 4.5Z" fill="#777"/></svg></div>
<div class="sbt" style="left:1346px;top:484px;width:15px;height:17px"></div>
<div class="sbb" style="left:1346px;top:600px"><svg width="13" height="13"><path d="M2.5 4.5H10.5L6.5 8.5Z" fill="#777"/></svg></div>
<!-- tab bar -->
<div class="abs" style="left:0;top:614px;width:1365px;height:29px;background:#e6e6e6;border-top:1px solid #bdbdbd;border-bottom:1px solid #c6c6c6"></div>
<div class="abs" style="left:0;top:643px;width:1365px;height:2px;background:#f0f0f0"></div>
<div class="abs" style="left:1061px;top:643px;width:38px;height:2px;background:#c8c8c8"></div>
<div class="abs" style="left:573px;top:615px;width:4px;height:27px;background:#d4d4d4;border-left:1px solid #e8e8e8"></div>
<svg width="80" height="28" style="position:absolute;left:0;top:614px"><path d="M33 10V17L29.5 13.5Z" fill="#bdbdbd"/><path d="M58 10V17L61.5 13.5Z" fill="#bdbdbd"/></svg>
<div class="abs" style="left:102px;top:614px;width:102px;height:25px;background:#fff;border-left:1px solid #a9a9a9;border-right:1px solid #a9a9a9;border-bottom:2px solid #217346"></div>
<div class="abs" style="left:114px;top:620px;font-size:13px;letter-spacing:-0.4px;font-weight:bold;color:#217346;line-height:16px">Product_Sale</div>
<svg width="20" height="20" style="position:absolute;left:235px;top:618px"><circle cx="10" cy="10" r="7.5" fill="none" stroke="#8a8a8a" stroke-width="1.1"/><path d="M10 6V14M6 10H14" stroke="#777" stroke-width="1.8"/></svg>
<svg width="6" height="14" style="position:absolute;left:356px;top:621px"><rect x="2" y="2" width="2" height="2" fill="#b4b4b4"/><rect x="2" y="6" width="2" height="2" fill="#b4b4b4"/><rect x="2" y="10" width="2" height="2" fill="#b4b4b4"/></svg>
<!-- horiz scroll left -->
<div class="abs" style="left:375px;top:621px;width:197px;height:15px;background:#dadada"></div>
<div class="sbb" style="left:375px;top:621px"><svg width="13" height="13"><path d="M8.5 2.5V10.5L4.5 6.5Z" fill="#777"/></svg></div>
<div class="sbt" style="left:390px;top:621px;width:26px;height:15px"></div>
<div class="sbb" style="left:557px;top:621px"><svg width="13" height="13"><path d="M4.5 2.5V10.5L8.5 6.5Z" fill="#777"/></svg></div>
<!-- horiz scroll right -->
<div class="abs" style="left:579px;top:621px;width:764px;height:15px;background:#dadada"></div>
<div class="sbb" style="left:579px;top:621px"><svg width="13" height="13"><path d="M8.5 2.5V10.5L4.5 6.5Z" fill="#777"/></svg></div>
<div class="sbt" style="left:594px;top:621px;width:176px;height:15px"></div>
<div class="sbb" style="left:1328px;top:621px"><svg width="13" height="13"><path d="M4.5 2.5V10.5L8.5 6.5Z" fill="#777"/></svg></div>
</body></html>
